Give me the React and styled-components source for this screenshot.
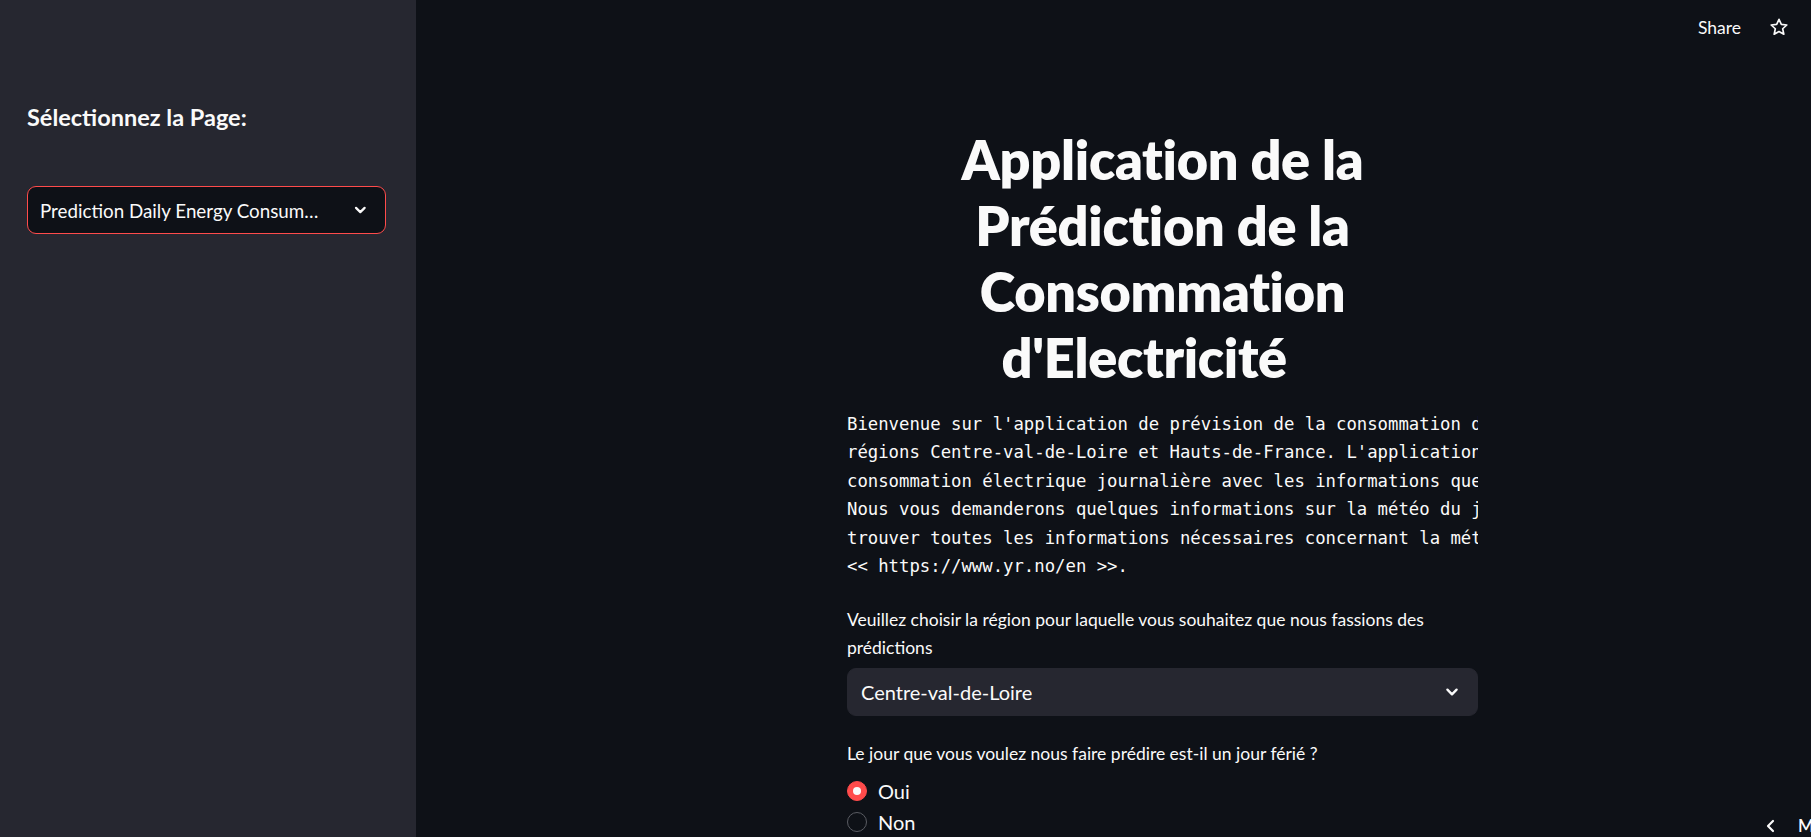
import React, { useState } from "react";
import styled, { createGlobalStyle } from "styled-components";

const GlobalStyle = createGlobalStyle`
  html, body {
    margin: 0;
    padding: 0;
    height: 100%;
    overflow: hidden;
    background: #0e1117;
  }
  * {
    box-sizing: border-box;
  }
`;

const sans = `"Lato", "Noto Sans", sans-serif`;
const mono = `"DejaVu Sans Mono", "Liberation Mono", monospace`;

const Chevron = ({ size = 22 }) => (
  <svg width={size} height={size} viewBox="0 0 24 24" fill="none">
    <path
      d="M7 9.5l5 5 5-5"
      stroke="#fafafa"
      strokeWidth="2.6"
      strokeLinecap="round"
      strokeLinejoin="round"
    />
  </svg>
);

const StarIcon = () => (
  <svg width="20" height="20" viewBox="0 0 24 24" fill="none">
    <path
      d="M12 2.8l2.8 6.1 6.6.7-5 4.5 1.4 6.6L12 17.4l-5.8 3.3 1.4-6.6-5-4.5 6.6-.7z"
      stroke="#fafafa"
      strokeWidth="2"
      strokeLinejoin="round"
    />
  </svg>
);

const App = () => {
  const [holiday, setHoliday] = useState("Oui");

  return (
    <>
      <GlobalStyle />
      <Shell>
        <Sidebar>
          <SideTitle>Sélectionnez la Page:</SideTitle>
          <Select $variant="sidebar">
            <SelectText>Prediction Daily Energy Consumption</SelectText>
            <Chevron />
          </Select>
        </Sidebar>

        <Main>
          <Toolbar>
            <ShareButton>Share</ShareButton>
            <StarIcon />
          </Toolbar>

          <Content>
            <Title>
              Application de la Prédiction de la Consommation d'Electricité{"\u00a0\u00a0\u00a0"}
            </Title>

            <Preformatted>
              {`Bienvenue sur l'application de prévision de la consommation d'électricité des
régions Centre-val-de-Loire et Hauts-de-France. L'application permet de prédire la
consommation électrique journalière avec les informations que vous nous donnerez.
Nous vous demanderons quelques informations sur la météo du jour. Vous pourrez
trouver toutes les informations nécessaires concernant la météo sur le site
<< https://www.yr.no/en >>.`}
            </Preformatted>

            <Label>
              Veuillez choisir la région pour laquelle vous souhaitez que nous fassions des prédictions
            </Label>
            <Select $variant="main">
              <SelectText>Centre-val-de-Loire</SelectText>
              <Chevron />
            </Select>

            <Label $spaced>
              Le jour que vous voulez nous faire prédire est-il un jour férié ?
            </Label>
            <RadioGroup>
              {["Oui", "Non"].map((opt) => (
                <RadioRow key={opt} onClick={() => setHoliday(opt)}>
                  <RadioDot $checked={holiday === opt} />
                  <span>{opt}</span>
                </RadioRow>
              ))}
            </RadioGroup>
          </Content>

          <ManageApp>
            <svg width="12" height="14" viewBox="0 0 12 14" fill="none">
              <path d="M8 2L3 7l5 5" stroke="#fafafa" strokeWidth="2.2" strokeLinecap="round" strokeLinejoin="round" />
            </svg>
            <span>Manage app</span>
          </ManageApp>
        </Main>
      </Shell>
    </>
  );
};

export default App;

const Shell = styled.div`
  display: flex;
  height: 100vh;
  font-family: ${sans};
  color: #fafafa;
`;

const Sidebar = styled.aside`
  width: 416px;
  flex-shrink: 0;
  background: #262730;
  padding: 102px 27px 0 27px;
  display: flex;
  flex-direction: column;
`;

const SideTitle = styled.h2`
  margin: 0 0 53px 0;
  font-size: 23.5px;
  font-weight: 700;
  line-height: 31px;
  color: #fafafa;
`;

const Select = styled.div`
  display: flex;
  align-items: center;
  justify-content: space-between;
  height: 48px;
  border-radius: 9px;
  padding: 0 14px 0 ${(p) => (p.$variant === "sidebar" ? "12px" : "13px")};
  font-size: ${(p) => (p.$variant === "sidebar" ? "18.8px" : "20px")};
  background: ${(p) => (p.$variant === "sidebar" ? "#0e1117" : "#262730")};
  border: 1px solid ${(p) => (p.$variant === "sidebar" ? "#ff4b4b" : "#262730")};
  width: ${(p) => (p.$variant === "sidebar" ? "359px" : "100%")};
  color: #fafafa;
  gap: 22px;
`;

const SelectText = styled.span`
  white-space: nowrap;
  overflow: hidden;
  text-overflow: ellipsis;
`;

const Main = styled.main`
  flex: 1;
  position: relative;
  overflow: hidden;
  background: #0e1117;
`;

const Toolbar = styled.header`
  height: 54px;
  display: flex;
  align-items: center;
  justify-content: flex-end;
  gap: 28px;
  padding-right: 22px;
`;

const ShareButton = styled.span`
  font-size: 17.5px;
  color: #fafafa;
`;

const Content = styled.section`
  width: 631px;
  margin-left: 431px;
  padding-top: 73px;
  display: flex;
  flex-direction: column;
`;

const Title = styled.h1`
  margin: 0 0 19px 0;
  padding: 0 50px;
  text-align: center;
  font-size: 54px;
  font-weight: 800;
  line-height: 66px;
  letter-spacing: -0.3px;
`;

const Preformatted = styled.pre`
  margin: 0 0 26px 0;
  font-family: ${mono};
  font-size: 17.3px;
  line-height: 28.4px;
  white-space: pre;
  overflow: hidden;
  color: #fafafa;
`;

const Label = styled.p`
  margin: ${(p) => (p.$spaced ? "24px" : "0")} 0 6px 0;
  font-size: 17.5px;
  line-height: 28px;
`;

const RadioGroup = styled.div`
  display: flex;
  flex-direction: column;
  gap: 3px;
  margin-top: 3px;
`;

const RadioRow = styled.label`
  display: flex;
  align-items: center;
  gap: 11px;
  height: 28px;
  font-size: 20px;
  cursor: pointer;
`;

const RadioDot = styled.span`
  width: 20px;
  height: 20px;
  border-radius: 50%;
  flex-shrink: 0;
  background: ${(p) => (p.$checked ? "#ff4b4b" : "#0e1117")};
  border: 1px solid ${(p) => (p.$checked ? "#ff4b4b" : "#5a5c63")};
  display: flex;
  align-items: center;
  justify-content: center;

  &::after {
    content: "";
    display: ${(p) => (p.$checked ? "block" : "none")};
    width: 8px;
    height: 8px;
    border-radius: 50%;
    background: #fafafa;
  }
`;

const ManageApp = styled.div`
  position: absolute;
  left: 1349px;
  bottom: 1px;
  display: flex;
  align-items: center;
  gap: 21px;
  font-size: 17px;
  font-weight: 600;
  white-space: nowrap;
  color: #fafafa;
`;
